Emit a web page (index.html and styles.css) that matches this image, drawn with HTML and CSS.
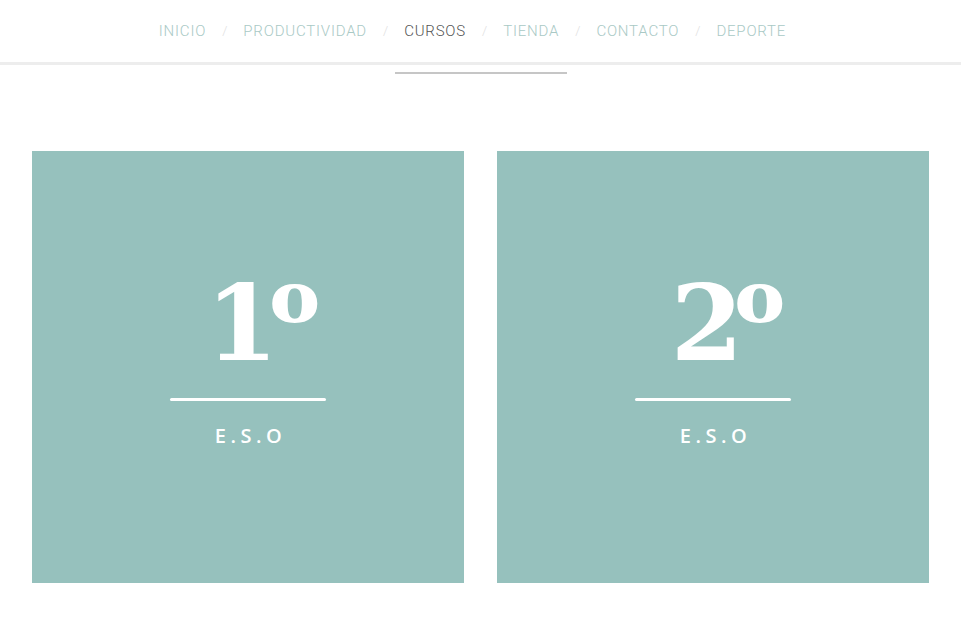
FILE: index.html
```html
<!DOCTYPE html>
<html lang="es">
<head>
  <meta charset="UTF-8">
  <meta name="viewport" content="width=device-width, initial-scale=1.0">
  <title>Cursos</title>
  <link rel="stylesheet" href="styles.css">
</head>
<body>

<div id="menu">
  <ul class="nav">
    <li><a href="#">Inicio</a></li>
    <li class="sep">/</li>
    <li><a href="#">Productividad</a></li>
    <li class="sep">/</li>
    <li><a href="#" class="active">Cursos</a></li>
    <li class="sep">/</li>
    <li><a href="#">Tienda</a></li>
    <li class="sep">/</li>
    <li><a href="#">Contacto</a></li>
    <li class="sep">/</li>
    <li><a href="#">Deporte</a></li>
  </ul>
</div>

<div class="divider"></div>

<div class="cursos">
  <a href="#" class="curso">
    <span class="num">1<span class="ord">º</span></span>
    <span class="line"></span>
    <span class="nivel">E.S.O</span>
  </a>
  <a href="#" class="curso">
    <span class="num">2<span class="ord">º</span></span>
    <span class="line"></span>
    <span class="nivel">E.S.O</span>
  </a>
</div>

</body>
</html>
```

FILE: styles.css
```css
body {
  font-family: Roboto, "Open Sans", sans-serif;
  background-color: #fff;
  margin: 0;
  padding: 0;
}
#menu {
  height: 60px;
  padding-bottom: 2px;
  border-bottom: 3px solid #ededed;
  display: flex;
  justify-content: center;
  align-items: center;
}
.nav {
  list-style: none;
  margin: 0;
  padding: 0 16px 0 0;
  display: flex;
  align-items: center;
  gap: 16px;
}
.nav a {
  font-size: 15px;
  font-weight: 300;
  letter-spacing: 0.8px;
  text-transform: uppercase;
  text-decoration: none;
  color: #a9c9c5; /* verde agua suave */
}
.nav a.active {
  color: #555;
}
.nav .sep {
  color: #e0e0e0;
  font-size: 13px;
  font-weight: 300;
}
.divider {
  width: 172px;
  height: 2px;
  background-color: #c6c6c6;
  margin: 7px auto 0;
}
.cursos {
  display: grid;
  grid-template-columns: 1fr 1fr;
  gap: 33px;
  padding: 0 32px;
  margin-top: 77px;
}
.curso {
  aspect-ratio: 1;
  background-color: #96c1bd;
  display: flex;
  flex-direction: column;
  align-items: center;
  color: #fff;
  text-decoration: none;
  padding-top: 121px;
  box-sizing: border-box;
}
.num {
  font-family: "DejaVu Serif", serif;
  font-weight: bold;
  font-size: 104px;
  line-height: 1;
  letter-spacing: -9px;
  margin-left: 30px;
}
/* solo la "o" del ordinal, sin la raya de abajo */
.ord {
  display: inline-block;
  font-size: 102px;
  line-height: 0.8;
  letter-spacing: 0;
  clip-path: inset(0 0 0.39em 0);
}
/* Decoración */
.line {
  width: 156px;
  height: 3px;
  background-color: #fff;
  border-radius: 2px;
  margin-top: 22px;
}
.nivel {
  font-family: "Open Sans", sans-serif;
  font-weight: 600;
  font-size: 20px;
  letter-spacing: 4.5px;
  margin-top: 21px;
  margin-left: 5px;
}
```
